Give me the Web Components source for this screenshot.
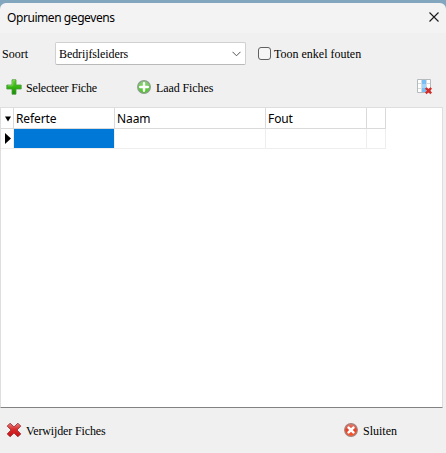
<!DOCTYPE html>
<html lang="nl">
<head>
<meta charset="utf-8">
<title>Opruimen gegevens</title>
<style>
body{margin:0;width:446px;height:453px;overflow:hidden;background:#82a6bd}
</style>
</head>
<body>
<cleanup-dialog></cleanup-dialog>
<script>
const define = (name, html) => customElements.define(name, class extends HTMLElement {
  constructor() {
    super();
    this.attachShadow({ mode: 'open' }).innerHTML = html;
  }
});

const icons = {
  plus: `<defs><linearGradient id="g" x2="0" y2="1"><stop stop-color="#5fd02e"/><stop offset=".5" stop-color="#35b512"/><stop offset="1" stop-color="#178a05"/></linearGradient></defs>
    <path d="M6 .8h4v5.200h5.200v4H10v5.200H6V10H.8V6H6z" fill="url(#g)" stroke="#4b9a3c" stroke-width=".8" stroke-linejoin="round"/><path d="M6.800 6.700V1.700h2.400M1.800 6.800h4.600" fill="none" stroke="#92e36c" stroke-width=".7"/>`,
  add: `<defs><linearGradient id="g" x2="0" y2="1"><stop stop-color="#8fd27c"/><stop offset="1" stop-color="#45c51d"/></linearGradient></defs>
    <circle cx="8" cy="8" r="6.300" fill="url(#g)" stroke="#8b9f8b" stroke-width="1.300"/><path d="M8 4.200v7.600M4.200 8h7.600" stroke="#fff" stroke-width="2.400" stroke-linecap="round"/>`,
  remove: `<defs><linearGradient id="g" x2="0" y2="1"><stop stop-color="#e88080"/><stop offset=".45" stop-color="#d92b2b"/><stop offset="1" stop-color="#c80d12"/></linearGradient></defs>
    <path d="M4.1 1.2 8 4.900l3.900-3.700 2.900 2.900L11 8l3.800 3.900-2.900 2.900L8 11.100l-3.900 3.700-2.900-2.900L5 8 1.200 4.100z" fill="url(#g)" stroke="#9c3438" stroke-width=".9" stroke-linejoin="round"/>`,
  close: `<defs><linearGradient id="g" x2="0" y2="1"><stop stop-color="#e3806f"/><stop offset=".5" stop-color="#e84025"/><stop offset="1" stop-color="#fb5a32"/></linearGradient></defs>
    <circle cx="8" cy="8" r="6.300" fill="url(#g)" stroke="#a87f7a" stroke-width="1.200"/><path d="m5.600 5.600 4.800 4.800m0-4.800-4.800 4.800" stroke="#fff" stroke-width="2.600" stroke-linecap="round"/>`,
  column: `<path d="M.5.5h13v13H.5z" fill="#fff"/><path d="M5 1h4.500v12H5z" fill="#79bef5"/><path d="M5 5h4.500v4H5z" fill="#a3d5fb"/><path d="M1 4.500h4M1 9.500h4M9.500 4.500H13M9.500 9.500H13M4.500 1v12M9.500 1v12" stroke="#d5dadd"/><path d="M.5.5h13v13H.5z" fill="none" stroke="#b5babd"/><path d="m8.800 9 5.400 5.400m0-5.400-5.400 5.400" stroke="#d32b27" stroke-width="2.300"/>`
};

customElements.define('app-icon', class extends HTMLElement {
  constructor() {
    super();
    this.attachShadow({ mode: 'open' });
  }
  connectedCallback() {
    this.shadowRoot.innerHTML = `<style>:host{display:block;width:16px;height:16px;flex:none}svg{display:block}</style>
      <svg width="16" height="16" viewBox="0 0 16 16">${icons[this.getAttribute('name')]}</svg>`;
  }
});

define('tool-button', `<style>
  :host{display:flex;align-items:center;gap:4px;height:16px;font:12px/16px "Liberation Serif",serif;white-space:nowrap}
  span{padding-top:2px}
  </style><slot name="icon"></slot><span><slot></slot></span>`);

define('title-bar', `<style>
  :host{display:flex;justify-content:space-between;box-sizing:border-box;height:30px;padding:6px 6px 0 7px;background:#f3f3f3;border-radius:6px 6px 0 0;font:12px/17px "Noto Sans",sans-serif;letter-spacing:-.43px;white-space:nowrap}
  svg{display:block;margin-top:2px}
  </style><span><slot></slot></span>
  <svg width="12" height="12" viewBox="0 0 12 12"><path d="m1.500 1.500 9 9m0-9-9 9" stroke="#1a1a1a" stroke-width="1.100"/></svg>`);

define('combo-box', `<style>
  :host{display:flex;justify-content:space-between;align-items:center;box-sizing:border-box;width:191px;height:23px;border:1px solid #d0d0d0;border-bottom-color:#b9b9b9;border-radius:2px;background:#fff;padding:0 4px 0 3px;letter-spacing:-.1px}
  svg{margin-top:1px}
  </style><span><slot></slot></span>
  <svg width="9" height="6" viewBox="0 0 9 6"><path d="m.5 .8 4 4 4-4" fill="none" stroke="#555"/></svg>`);

define('check-box', `<style>
  :host{display:flex;align-items:center;gap:3px;white-space:nowrap}
  i{box-sizing:border-box;width:13px;height:13px;border:1px solid #606060;border-radius:3px;background:#f5f5f5}
  </style><i></i><span><slot></slot></span>`);

define('data-grid', `<style>
  :host{display:block;box-sizing:border-box;width:443px;height:301px;border:1px solid #dedede;border-bottom-color:#828282;border-radius:1px;background:#fff;font:12px/17px "Noto Sans",sans-serif}
  .row{display:grid;grid-template-columns:13px 101px 151px 101px 19px;width:385px}
  .row>*{box-sizing:border-box;height:20px;border-right:1px solid #eee;border-bottom:1px solid #eee;padding-left:2px}
  .head>*{height:21px;padding-top:2px;border-color:#dadada;letter-spacing:-.1px}
  .row>.mark{padding:0;display:flex;align-items:center;justify-content:flex-end}
  .head>.mark{padding-top:2px}
  .row>.selected{background:#0078d7}
  </style>
  <div class="row head"><div class="mark"><svg width="9" height="6" viewBox="0 0 9 6"><path d="M1 .5h6L4 5.500z"/></svg></div><div><slot name="c1"></slot></div><div><slot name="c2"></slot></div><div><slot name="c3"></slot></div><div></div></div>
  <div class="row"><div class="mark"><svg width="9" height="11" viewBox="0 0 9 11"><path d="M1 0v11l6-5.500z"/></svg></div><div class="selected"></div><div></div><div></div><div></div></div>`);

define('cleanup-dialog', `<style>
  :host{display:block;box-sizing:border-box;height:453px;padding-top:3px;color:#000;font:12px/16px "Liberation Serif",serif}
  .body{height:420px;background:#f0f0f0;overflow:hidden}
  .filter{display:flex;align-items:center;height:23px;margin-top:9px;padding-left:2px}
  .filter>span{width:53px}
  check-box{margin-left:12px}
  .tools,.foot{display:flex;padding-left:6px}
  .tools{margin:14px 0 12px;height:16px}
  .foot{margin-top:14px}
  .tools tool-button:first-child{width:130px;letter-spacing:-.18px}
  .tools>app-icon{margin-left:auto;margin-right:13px}
  .tools tool-button:nth-child(2){letter-spacing:-.1px}
  .foot tool-button:first-child{width:337px;letter-spacing:-.13px}
  </style>
  <title-bar>Opruimen gegevens</title-bar>
  <div class="body">
    <div class="filter"><span>Soort</span><combo-box>Bedrijfsleiders</combo-box><check-box>Toon enkel fouten</check-box></div>
    <div class="tools">
      <tool-button><app-icon slot="icon" name="plus"></app-icon>Selecteer Fiche</tool-button>
      <tool-button><app-icon slot="icon" name="add"></app-icon>Laad Fiches</tool-button>
      <app-icon name="column"></app-icon>
    </div>
    <data-grid><span slot="c1">Referte</span><span slot="c2">Naam</span><span slot="c3">Fout</span></data-grid>
    <div class="foot">
      <tool-button><app-icon slot="icon" name="remove"></app-icon>Verwijder Fiches</tool-button>
      <tool-button><app-icon slot="icon" name="close"></app-icon>Sluiten</tool-button>
    </div>
  </div>`);
</script>
</body>
</html>
